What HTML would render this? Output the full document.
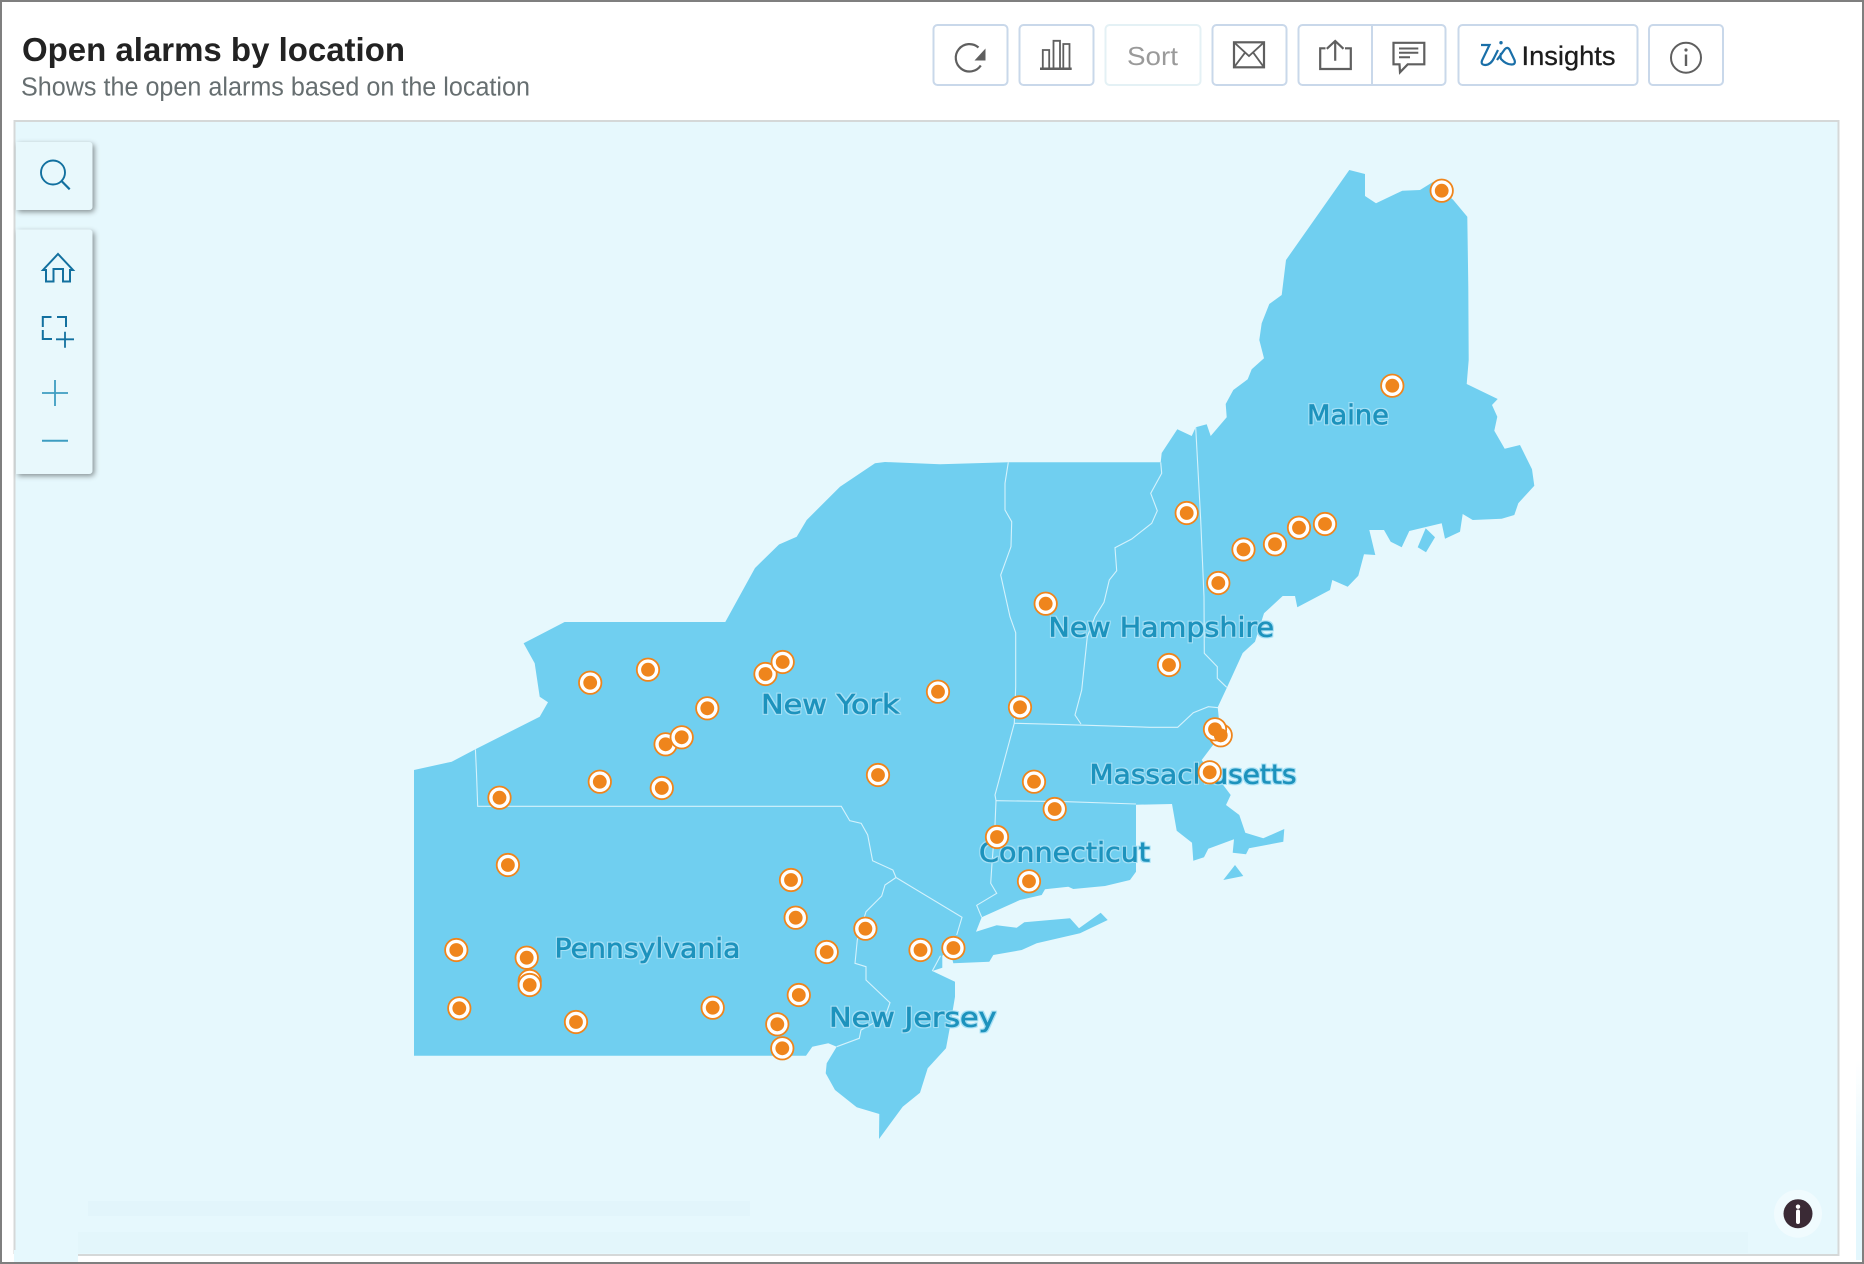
<!DOCTYPE html>
<html><head><meta charset="utf-8"><title>Open alarms by location</title>
<style>
html,body{margin:0;padding:0;background:#fff;width:1864px;height:1264px;overflow:hidden}
svg{display:block}
text{font-family:"Liberation Sans",sans-serif}
.lbl{font-family:"DejaVu Sans","Liberation Sans",sans-serif;font-size:27px;fill:#1b93bd;stroke:#1b93bd;stroke-width:.7px;filter:url(#halo)}
.btn{fill:#fff;stroke:#c9d8ea;stroke-width:2}
.ic{fill:none;stroke:#5f5f5f;stroke-width:2.200}
.b{fill:none;stroke:#d4f2fc;stroke-width:1.100}
</style></head><body>
<svg width="1864" height="1264" viewBox="0 0 1864 1264" xmlns="http://www.w3.org/2000/svg">
<defs>
<filter id="sh" x="-30%" y="-20%" width="160%" height="140%"><feDropShadow dx="2" dy="2" stdDeviation="2.600" flood-color="#000" flood-opacity=".42"/></filter>
<filter id="halo" x="-5%" y="-15%" width="110%" height="130%">
<feMorphology in="SourceAlpha" operator="dilate" radius="1" result="d"/>
<feFlood flood-color="#a5e1f6"/><feComposite in2="d" operator="in" result="h"/>
<feMerge><feMergeNode in="h"/><feMergeNode in="SourceGraphic"/></feMerge>
</filter>
<linearGradient id="fade" x1="0" y1="0" x2="0" y2="1"><stop offset="0" stop-color="#e4f7fd" stop-opacity="0"/><stop offset=".6" stop-color="#e4f7fd"/><stop offset="1" stop-color="#e4f7fd"/></linearGradient>
<symbol id="mk" overflow="visible" viewBox="0 0 1 1" width="1" height="1"><circle cx="0" cy="0" r="11.200" fill="#fff" stroke="#ef851c" stroke-width="1.800"/><circle cx="0" cy="0" r="6.900" fill="#ef851c"/></symbol>
</defs>
<rect width="1864" height="1264" fill="#fff"/>
<rect x="1856" y="1060" width="6" height="200" fill="url(#fade)"/>
<!-- map area -->
<rect x="14.500" y="120.500" width="1824" height="1134" fill="#e6f8fd"/>
<path d="M14.500 1254V121H1838.500V1255H78" fill="none" stroke="#d5d8d8" stroke-width="2"/>
<rect x="14" y="1250" width="64" height="12" fill="#e6f8fd"/>
<rect x="88" y="1201" width="662" height="15" fill="#e0f4f9" opacity=".7"/>
<rect x="78" y="1232" width="1670" height="21" fill="#e0f4f9" opacity=".5"/>

<!-- header text -->
<text x="22" y="61" font-size="33" font-weight="700" fill="#222" textLength="383" lengthAdjust="spacingAndGlyphs">Open alarms by location</text>
<text x="21" y="95.500" font-size="25.500" fill="#666e70" textLength="509" lengthAdjust="spacingAndGlyphs">Shows the open alarms based on the location</text>

<!-- toolbar -->
<rect class="btn" x="933.500" y="25" width="74" height="60" rx="4"/>
<rect class="btn" x="1019.500" y="25" width="74" height="60" rx="4"/>
<rect x="1105.500" y="25" width="95" height="60" rx="4" fill="#fff" stroke="#e4f1f5" stroke-width="2"/>
<rect class="btn" x="1212.500" y="25" width="74" height="60" rx="4"/>
<rect class="btn" x="1298.500" y="25" width="147" height="60" rx="4"/>
<path d="M1372 25V85" stroke="#c9d8ea" stroke-width="2"/>
<rect class="btn" x="1458.500" y="25" width="179" height="60" rx="4"/>
<rect class="btn" x="1649" y="25" width="74" height="60" rx="4"/>

<!-- refresh -->
<path d="M978.500 47.500A13.700 13.700 0 1 0 980.800 65.500" class="ic"/>
<path d="M985.500 48.500V60.500H974.500Z" fill="#5f5f5f"/>
<!-- chart -->
<path d="M1040 68.700H1071.700" stroke="#5f5f5f" stroke-width="2.500" fill="none"/>
<path d="M1042.800 68V50H1049.200V68M1053.500 68V40.800H1060V68M1063.300 68V44H1069.500V68" fill="none" stroke="#5f5f5f" stroke-width="1.800"/>
<!-- sort -->
<text x="1127" y="65" font-size="26" fill="#9a9a9a" textLength="51" lengthAdjust="spacingAndGlyphs">Sort</text>
<!-- mail -->
<rect x="1234" y="42.300" width="30" height="25" fill="none" stroke="#5f5f5f" stroke-width="2.200"/>
<path d="M1234 42.300L1249 56L1264 42.300M1234 67.300L1245 52.700M1264 67.300L1253.300 52.700" fill="none" stroke="#5f5f5f" stroke-width="1.800"/>
<!-- share -->
<path d="M1325.500 48.300H1320.200V69H1350.800V48.300H1345" class="ic"/>
<path d="M1335.200 60.700V41.500M1326.800 48.800L1335.200 41L1343.500 48.800" class="ic"/>
<!-- comment -->
<path d="M1393.500 42.800H1424.300V64.300H1407.700L1400 72.300L1399.500 64.300H1393.500Z" class="ic"/>
<path d="M1399 48.500H1418.300M1399 52.800H1418.300M1399 57.300H1410" fill="none" stroke="#5f5f5f" stroke-width="2"/>
<!-- zia -->
<path d="M1481 45H1489.500L1482 60.500Q1480.500 65 1485.500 65Q1491 64.500 1494 58L1498 50" fill="none" stroke="#1a6fa8" stroke-width="2.200"/>
<circle cx="1501" cy="42.700" r="1.700" fill="#1a6fa8"/>
<path d="M1497 60L1505 49Q1507.500 46.500 1509.500 49.500L1514.500 60Q1516 64.500 1511.500 64.500Q1506 64.500 1501 59Q1500 56.500 1501 53" fill="none" stroke="#1a6fa8" stroke-width="2.200"/>
<text x="1521.500" y="65" font-size="27" fill="#1c1c1c" stroke="#1c1c1c" stroke-width=".3" textLength="94" lengthAdjust="spacingAndGlyphs">Insights</text>
<!-- info -->
<circle cx="1686" cy="57.700" r="15" fill="none" stroke="#5f5f5f" stroke-width="2"/>
<circle cx="1686" cy="50" r="1.600" fill="#5f5f5f"/>
<path d="M1686 54.500V66" stroke="#5f5f5f" stroke-width="2.400"/>

<!-- map land -->
<path fill="#70cff0" d="M1349.300 170L1365 174V196L1376 203.300L1402.300 190.700L1420 190L1433.300 181.700L1453.300 200L1467.300 216.700L1468.300 286.700L1468.700 360L1466.700 384L1497.700 399L1492 405L1497.300 416.700L1494.300 430.700L1504.700 448.700L1520 445L1532 469.300L1534.300 485.700L1518.300 503.300L1514.300 515L1501.700 518.700L1472.700 520L1462.700 514L1460 531.700L1445 538.700L1441.700 523.300L1409.300 531L1401.700 547.300L1390.700 541.700L1384 530H1369.300L1375.300 555L1364 554.300L1358.300 575.700L1347.700 586.700L1332.300 580L1330 590L1297.300 607.300L1295 596H1282.700L1264 613.300L1255 641.700L1242.700 653L1227.300 686.700L1217.700 707.300L1219 720L1213 745L1201.700 760L1209.700 772L1221.700 783L1230.700 795L1226 805L1239.300 815L1245.300 832.700L1263.300 838.300L1284.300 829L1283.300 841.700L1249 848.300L1246 854.300L1232.700 852.700L1234 839.300L1208.300 848.700L1204 857.300L1193.300 860.700L1192 842.700L1176.700 830.700L1172 804L1136 804.700V871.700L1130 880L1105 886L1073.300 889L1068.300 886.700L1045 889.300L1041.700 895L1020 900L981.700 917.300L976 931.700L996.700 925.300L1016.700 927.700L1024.300 922.300L1070 918.300L1079 928.300L1100.700 912.700L1107.700 920L1080 933.300L1036.700 943.300L1021.700 950L993.300 955L989.300 961.700L953.300 963.300L950 950L942.300 955.700V967.700L932.300 971L955 981.700V996.700L950 1026.700L946 1048.300L927.700 1068.300L920 1092.700L902.700 1106.700L879 1139L879.300 1114L856.700 1107.300L835 1090L825.700 1073.300L826.700 1063.300L836.700 1046.700L828.300 1043.300L812.300 1046.700L806 1055.700H414V770L451.700 761.700L475.400 749.300L539.700 716.700L548 702.300L539.700 696.700L534.700 663.300L523.600 643.300L564.600 622H725.300L755 568L779 544.500L796.700 536.700L806.700 520L840 486.700L875 463.300L885 462L940 464.300L1008.300 462.300H1160.700L1161.700 453L1177.300 429.300L1191.700 436L1195.700 427.300L1206.700 424.300L1210.700 436L1226.700 417.300L1225.700 404L1233.300 390L1247.700 379.300L1251.700 369.300L1264 358.300L1259.300 340L1261.700 323.300L1269.300 304L1281.700 295L1286 260Z"/>
<path fill="#70cff0" d="M1425.700 528.300L1435 537.300L1426 552.300L1417.700 547.300Z"/>
<path fill="#70cff0" d="M1235 865L1243.300 876L1223.300 880Z"/>

<!-- state borders -->
<path class="b" d="M1008.300 462.300L1005 483.300V510L1011.700 521.700L1011 546.700L1000.700 575L1010 616.700L1015.700 632.700V686.700L1014.300 723.300L995 795L996 800.700L995 825L992 863.300L990.700 883.300L996.700 893.300L976.700 905.300L981.700 917.300"/>
<path class="b" d="M1160.700 462.300L1161.700 473.300L1150.700 493.300L1157.300 510.700L1151.700 523.300L1131.700 539L1115 547.700L1116.700 570.700L1109.300 580L1104 602.300L1095 616.700L1087.300 636.700L1081.700 690L1075 715L1081 724"/>
<path class="b" d="M1195.700 427.300L1200.700 520L1204 596.700L1204.300 653.300L1217.300 666.700V678.300L1226.700 687.300"/>
<path class="b" d="M1014.300 723.300L1055 724.300L1088.300 725.300L1150 727.300H1177.700L1193.300 712.700L1208.300 706.700L1218.300 707.700"/>
<path class="b" d="M996 800.700L1066.700 801.700L1136 804"/>
<path class="b" stroke-width="1.400" d="M475.400 749.300L476.500 773.300L477.700 806.300H841.300L849.700 820.700L861.200 823.300L867.700 835L872.600 860.700L892.900 870L896 877.500"/>
<path class="b" d="M896 877.500L962 917.300L956.700 935M896 877.500L885 885L881.700 896L866 911.700L857.300 940L855 963.300L866 966.700V980L890 1002.700L885 1016.700L861 1030L859.300 1038.300L836.700 1046.700"/>
<path class="b" d="M940.500 955.700L932.300 971"/>

<!-- labels -->
<text class="lbl" x="1307" y="424" textLength="82" lengthAdjust="spacingAndGlyphs">Maine</text>
<text class="lbl" x="1048.500" y="636.700" textLength="225.500" lengthAdjust="spacingAndGlyphs">New Hampshire</text>
<text class="lbl" x="761" y="713.300" textLength="138.500" lengthAdjust="spacingAndGlyphs">New York</text>
<text class="lbl" x="1089.500" y="783.300" textLength="207" lengthAdjust="spacingAndGlyphs">Massachusetts</text>
<text class="lbl" x="979" y="861.700" textLength="171" lengthAdjust="spacingAndGlyphs">Connecticut</text>
<text class="lbl" x="554.500" y="957.300" textLength="186" lengthAdjust="spacingAndGlyphs">Pennsylvania</text>
<text class="lbl" x="829" y="1026.700" textLength="167.500" lengthAdjust="spacingAndGlyphs">New Jersey</text>

<!-- markers -->
<use href="#mk" x="1441.700" y="190.700"/><use href="#mk" x="1392.300" y="385.700"/>
<use href="#mk" x="1186.700" y="513"/><use href="#mk" x="1243.500" y="549.500"/>
<use href="#mk" x="1275" y="544.300"/><use href="#mk" x="1299" y="527.700"/><use href="#mk" x="1325" y="524"/>
<use href="#mk" x="1218.300" y="583"/><use href="#mk" x="1045.700" y="603.700"/><use href="#mk" x="1169" y="665"/>
<use href="#mk" x="1020" y="707.300"/><use href="#mk" x="1220.700" y="735.300"/><use href="#mk" x="1215" y="729.300"/>
<circle cx="1220.700" cy="735.300" r="6.900" fill="#ef851c"/>
<use href="#mk" x="1209.700" y="772.300"/><use href="#mk" x="1034" y="781.700"/><use href="#mk" x="1054.700" y="809"/>
<use href="#mk" x="997" y="837"/><use href="#mk" x="1029" y="881.300"/>
<use href="#mk" x="590.200" y="682.700"/><use href="#mk" x="648" y="669.700"/>
<use href="#mk" x="765.500" y="674"/><use href="#mk" x="782.700" y="662"/>
<use href="#mk" x="707.300" y="708.300"/><use href="#mk" x="665.600" y="744.300"/><use href="#mk" x="681.700" y="737.300"/>
<use href="#mk" x="938" y="691.700"/><use href="#mk" x="599.800" y="781.700"/><use href="#mk" x="661.800" y="788"/>
<use href="#mk" x="499.500" y="797.700"/><use href="#mk" x="878" y="775"/><use href="#mk" x="507.900" y="865"/>
<use href="#mk" x="791" y="880"/><use href="#mk" x="795.700" y="917.700"/><use href="#mk" x="865.400" y="928.700"/>
<use href="#mk" x="826.700" y="952"/><use href="#mk" x="920.500" y="950"/><use href="#mk" x="953.400" y="948"/>
<use href="#mk" x="456.300" y="950"/><use href="#mk" x="529.700" y="981"/><use href="#mk" x="526.700" y="957.700"/><use href="#mk" x="529.700" y="985"/>
<use href="#mk" x="459.300" y="1008.300"/><use href="#mk" x="576" y="1022"/><use href="#mk" x="712.700" y="1007.700"/>
<use href="#mk" x="798.800" y="995"/><use href="#mk" x="777.300" y="1024.300"/><use href="#mk" x="782.300" y="1048.300"/>

<!-- left control panels -->
<path d="M16 142H89a3.500 3.500 0 0 1 3.500 3.500V206.500a3.500 3.500 0 0 1-3.500 3.500H16Z" fill="#e8f8fc" filter="url(#sh)"/>
<path d="M16 229.500H89a3.500 3.500 0 0 1 3.500 3.500V470.500a3.500 3.500 0 0 1-3.500 3.500H16Z" fill="#e8f8fc" filter="url(#sh)"/>
<circle cx="53" cy="172.500" r="12" fill="none" stroke="#12709f" stroke-width="1.900"/>
<path d="M61.500 181L69.700 189.300" fill="none" stroke="#12709f" stroke-width="2.200"/>
<path d="M46 281.500V270H43L58 254L73 270H70V281.500H63V269H53.500V281.500Z" fill="none" stroke="#12709f" stroke-width="2"/>
<path d="M42.800 327V317H51.500M57 317H66V327M42.800 330V339H52" fill="none" stroke="#12709f" stroke-width="2"/>
<path d="M56 339.300H74M65 331.700V347.700" fill="none" stroke="#12709f" stroke-width="1.800"/>
<path d="M42 393H68M55 380V406" fill="none" stroke="#3d9dc1" stroke-width="1.800"/>
<path d="M42 440.700H68" fill="none" stroke="#3d9dc1" stroke-width="2"/>

<!-- bottom right info -->
<circle cx="1798" cy="1213.700" r="24" fill="#fff" opacity=".42"/>
<circle cx="1798" cy="1213.700" r="14.500" fill="#3a2a35"/>
<circle cx="1798" cy="1206.700" r="2.200" fill="#fff"/>
<path d="M1798 1211.500V1222" stroke="#fff" stroke-width="4" stroke-linecap="round"/>

<!-- outer frame -->
<path d="M1 1263V1H1863V1263Z" fill="none" stroke="#7f7f7f" stroke-width="2"/>
</svg>
</body></html>
